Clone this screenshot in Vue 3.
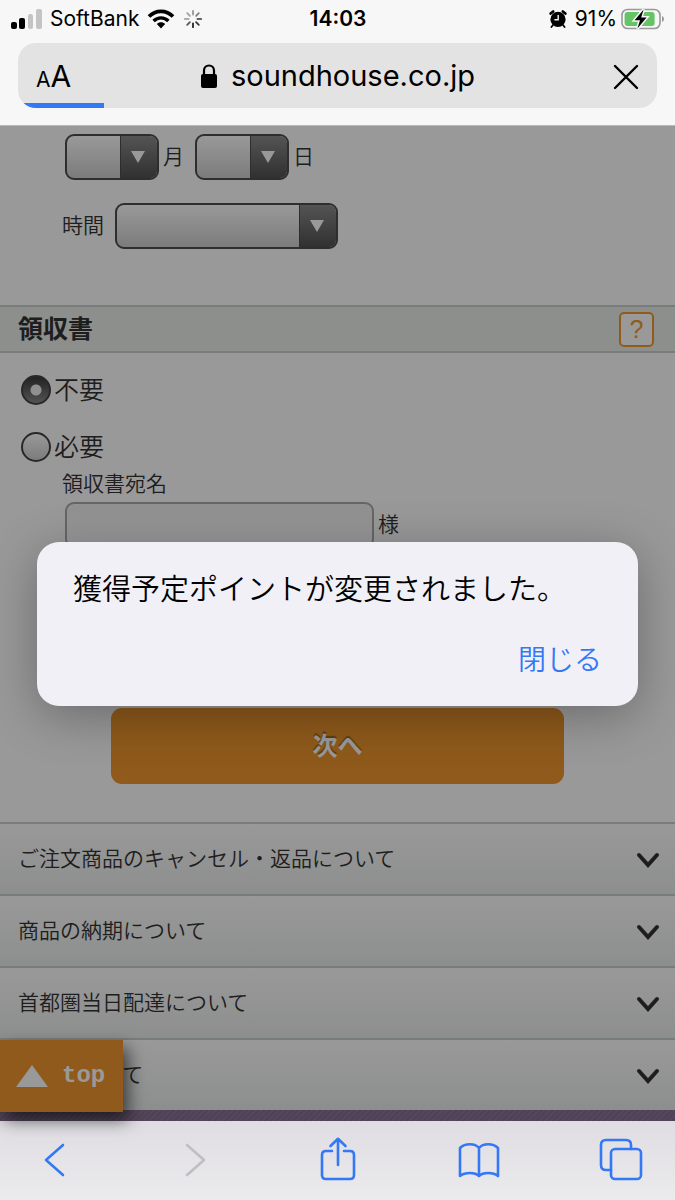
<script setup>
import { ref } from 'vue'

const month = ref('')
const day = ref('')
const time = ref('')
const receipt = ref('none')
const receiptName = ref('')
const showDialog = ref(true)
const progress = 13.5

const spokes = [0, 45, 90, 135, 180, 225, 270, 315]
const spokeOpacity = [0.45, 0.55, 0.7, 0.9, 1, 0.75, 0.35, 0.4]

// Help links under the form
const links = [
  'ご注文商品のキャンセル・返品について',
  '商品の納期について',
  '首都圏当日配達について',
  '送料について'
]
</script>

<template>
<div class="phone">

  <header class="browser-bar">
    <div class="status">
      <div class="status-left">
        <svg class="signal" width="31" height="20" viewBox="0 0 31 20">
          <rect x="0" y="13" width="6" height="7" rx="2" />
          <rect x="8" y="9" width="6" height="11" rx="2" />
          <rect x="17" y="5" width="5" height="15" rx="2" fill="#c4c4c4" />
          <rect x="25" y="0" width="6" height="20" rx="2" fill="#c4c4c4" />
        </svg>
        <span>SoftBank</span>
        <svg class="wifi" width="28" height="20" viewBox="0 0 28 20">
          <path d="M2 7.6C8.6 0.6 19.4 0.6 26 7.6" fill="none" stroke="#000" stroke-width="3.6" />
          <path d="M6.6 12C10.8 7.8 17.2 7.8 21.4 12" fill="none" stroke="#000" stroke-width="3.4" />
          <path d="M9.8 15C12.2 12.6 15.8 12.6 18.2 15L14 19.4Z" />
        </svg>
        <svg width="20" height="20" viewBox="-10 -10 20 20">
          <line
            v-for="(a, i) in spokes"
            :key="a"
            x1="0" y1="-4.4" x2="0" y2="-8.2"
            stroke="#222"
            stroke-width="1.8"
            stroke-linecap="round"
            :opacity="spokeOpacity[i]"
            :transform="`rotate(${a})`"
          />
        </svg>
      </div>

      <strong class="clock">14:03</strong>

      <div class="status-right">
        <svg width="18" height="18" viewBox="0 0 18 18">
          <circle cx="9" cy="9.4" r="7.6" />
          <path d="M1.6 3.6L4.2 1.4M16.4 3.6L13.8 1.4" stroke="#000" stroke-width="2.6" stroke-linecap="round" />
          <path d="M4 15L2.4 17M14 15L15.6 17" stroke="#000" stroke-width="1.8" stroke-linecap="round" />
          <path d="M9.2 5V9.8H5.4" fill="none" stroke="#f7f7f7" stroke-width="1.4" />
        </svg>
        <span>91%</span>
        <svg class="battery" width="44" height="22" viewBox="0 0 44 22">
          <rect x="1" y="1.5" width="38" height="19" rx="5.5" fill="none" stroke="#999" stroke-width="1.6" />
          <path d="M41 8C43.6 9 43.6 13 41 14Z" fill="#999" />
          <rect x="3.6" y="4" width="30" height="14" rx="3" fill="#65c466" />
          <path d="M22.6 1.4L13.6 12.2H19L16.4 20.6L25.6 9.6H20.2Z" stroke="#f7f7f7" stroke-width="3" />
          <path d="M22.6 1.4L13.6 12.2H19L16.4 20.6L25.6 9.6H20.2Z" />
        </svg>
      </div>
    </div>

    <div class="address">
      <button class="text-size"><small>A</small>A</button>
      <button class="url">
        <svg width="18" height="24" viewBox="0 0 18 24">
          <rect x="1" y="10" width="16" height="14" rx="2" />
          <path d="M4 11V6.5C4 -0.2 14 -0.2 14 6.5V11" fill="none" stroke="#000" stroke-width="2.2" />
        </svg>
        soundhouse.co.jp
      </button>
      <button class="stop">
        <svg width="26" height="26" viewBox="0 0 26 26">
          <path d="M2 3L24 25M24 3L2 25" stroke="#000" stroke-width="2.4" stroke-linecap="round" />
        </svg>
      </button>
      <div class="progress" :style="{ width: progress + '%' }"></div>
    </div>
  </header>

  <main class="page">
    <form class="form" @submit.prevent>
      <div class="date-row">
        <span class="select-box">
          <select id="month" v-model="month"></select>
        </span>
        <label for="month">月</label>
        <span class="select-box">
          <select id="day" v-model="day"></select>
        </span>
        <label for="day">日</label>
      </div>

      <div class="time-row">
        <label for="time">時間</label>
        <span class="select-box wide">
          <select id="time" v-model="time"></select>
        </span>
      </div>

      <div class="section-title">
        <h2>領収書</h2>
        <button type="button" class="help">?</button>
      </div>

      <div class="receipt">
        <label class="radio">
          <input type="radio" value="none" v-model="receipt" />不要
        </label>
        <label class="radio">
          <input type="radio" value="need" v-model="receipt" />必要
        </label>
        <div class="receipt-name">
          <label for="receipt-name">領収書宛名</label>
          <div class="name-row">
            <input id="receipt-name" type="text" v-model="receiptName" />
            <span>様</span>
          </div>
        </div>
      </div>

      <button type="submit" class="next">次へ</button>
    </form>

    <nav class="links">
      <a v-for="link in links" :key="link" href="#">
        {{ link }}
        <svg width="24" height="16" viewBox="0 0 24 16">
          <path d="M3 3L12 13L21 3" fill="none" stroke="#333" stroke-width="4" stroke-linecap="round" />
        </svg>
      </a>
    </nav>
    <div class="footer-strip"></div>

    <a class="to-top" href="#">
      <svg width="32" height="22" viewBox="0 0 32 22">
        <path d="M16 0L32 22H0Z" fill="#fff" />
      </svg>
      top
    </a>

    <div v-if="showDialog" class="backdrop">
      <div class="dialog" role="alertdialog">
        <p>獲得予定ポイントが変更されました。</p>
        <button @click="showDialog = false">閉じる</button>
      </div>
    </div>
  </main>

  <footer class="toolbar">
    <button>
      <svg width="44" height="44" viewBox="0 0 44 44">
        <path d="M31 6L14 21L31 36" />
      </svg>
    </button>
    <button class="off">
      <svg width="44" height="44" viewBox="0 0 44 44">
        <path d="M13 6L30 21L13 36" />
      </svg>
    </button>
    <button>
      <svg width="44" height="44" viewBox="0 0 44 44">
        <path d="M16 12H10Q6 12 6 16V36Q6 40 10 40H34Q38 40 38 36V16Q38 12 34 12H28" />
        <path d="M22 26V0M14.5 7L22 -0.2L29.5 7" />
      </svg>
    </button>
    <button>
      <svg width="44" height="44" viewBox="0 0 44 44">
        <path d="M22 9C18 4 8 4 3 9V37C8 33 18 33 22 37C26 33 36 33 41 37V9C36 4 26 4 22 9ZM22 9V37" />
      </svg>
    </button>
    <button>
      <svg width="44" height="44" viewBox="0 0 44 44">
        <rect x="12" y="10" width="30" height="30" rx="4" />
        <path d="M12 31H7Q2 31 2 26V6Q2 1 7 1H27Q32 1 32 6V10" />
      </svg>
    </button>
  </footer>

</div>
</template>

<style>
body {
  margin: 0;
}
</style>

<style scoped>
.phone {
  min-height: 100vh;
  display: flex;
  flex-direction: column;
  font-family: "Noto Sans CJK JP", sans-serif;
  font-weight: 350;
  color: #333;
}

.phone * {
  box-sizing: border-box;
}

button {
  border: none;
  background: none;
  padding: 0;
  font-family: inherit;
  font-weight: inherit;
  color: inherit;
  cursor: pointer;
}

svg {
  display: block;
  flex: none;
  overflow: visible;
}

/* Browser bar */
.browser-bar {
  background: #f7f7f7;
  border-bottom: 1px solid #bbb;
  padding: 0 18px 17px;
  font-family: Inter, sans-serif;
  font-weight: 400;
  color: #000;
}

.status {
  display: grid;
  grid-template-columns: 1fr auto 1fr;
  align-items: center;
  height: 37px;
  margin: 0 -8px 6px -7px;
  font-size: 21px;
}

.status-left,
.status-right {
  display: flex;
  align-items: center;
  gap: 8px;
}

.status-right {
  justify-content: flex-end;
}

.battery {
  margin-left: -4px;
}

.clock {
  font-weight: 600;
}

.address {
  position: relative;
  overflow: hidden;
  display: grid;
  grid-template-columns: 1fr auto 1fr;
  align-items: center;
  height: 65px;
  padding: 0 18px;
  border-radius: 18px;
  background: #e3e3e3;
}

.text-size {
  justify-self: start;
  font-size: 30px;
}

.text-size small {
  font-size: 21px;
}

.url {
  display: flex;
  align-items: center;
  gap: 13px;
  font-size: 29px;
}

.stop {
  justify-self: end;
}

.progress {
  position: absolute;
  left: 0;
  bottom: 0;
  height: 5px;
  background: #3478f6;
}

/* Page */
.page {
  position: relative;
  flex: 1;
  background: #fff;
  font-size: 21px;
  line-height: 30px;
}

.date-row,
.time-row,
.name-row {
  display: flex;
  align-items: center;
  gap: 4px;
}

.date-row {
  padding: 8px 65px 0;
}

.date-row label,
.time-row label,
.name-row span {
  padding-bottom: 4px;
}

.date-row label {
  margin-right: 7px;
}

.time-row {
  padding: 23px 62px 56px;
}

.time-row label {
  margin-right: 7px;
}

.select-box {
  position: relative;
  width: 94px;
  height: 46px;
}

.select-box.wide {
  width: 223px;
}

.select-box select {
  appearance: none;
  width: 100%;
  height: 100%;
  border: 2px solid #4d4d4d;
  border-radius: 9px;
  background: linear-gradient(#fff, #cfcfcf);
}

.select-box::before {
  content: '';
  position: absolute;
  top: 2px;
  right: 2px;
  bottom: 2px;
  width: 36px;
  border-left: 1px solid #4d4d4d;
  border-radius: 0 7px 7px 0;
  background: linear-gradient(#8c8c8c, #525252);
  pointer-events: none;
}

.select-box::after {
  content: '';
  position: absolute;
  top: 17px;
  right: 14px;
  border: 7px solid transparent;
  border-top: 12px solid #fff;
  border-bottom: none;
  pointer-events: none;
}

.section-title {
  display: flex;
  align-items: center;
  justify-content: space-between;
  height: 48px;
  padding: 0 21px 0 18px;
  background: #ebeeec;
  border-top: 2px solid #c9cfcc;
  border-bottom: 2px solid #c9cfcc;
}

.section-title h2 {
  margin: 0;
  padding-bottom: 4px;
  font-size: 25px;
  font-weight: 700;
}

.help {
  width: 35px;
  height: 35px;
  border: 2px solid #ee9a2d;
  border-radius: 5px;
  background: #fff;
  color: #ee9a2d;
  font-family: "Liberation Sans", sans-serif;
  font-size: 25px;
  line-height: 30px;
}

.receipt {
  padding: 22px 21px 0;
}

.radio {
  display: flex;
  gap: 3px;
  height: 30px;
  margin-bottom: 27px;
  font-size: 25px;
  line-height: 26px;
}

.radio + .radio {
  margin-bottom: 5px;
}

.radio input {
  appearance: none;
  width: 30px;
  height: 30px;
  margin: 0;
  border: 2px solid #444;
  border-radius: 50%;
  background: linear-gradient(#fff, #cfcfcf);
}

.radio input:checked {
  background:
    radial-gradient(circle, #f0f0f0 5px, transparent 6px),
    linear-gradient(#3a3a3a, #8a8a8a);
}

.receipt-name {
  padding-left: 41px;
}

.receipt-name label {
  display: block;
  margin-bottom: 5px;
}

.name-row input {
  width: 309px;
  height: 46px;
  margin-left: 3px;
  border: 2px solid #aaa;
  border-radius: 9px;
  background: linear-gradient(#f2f2f2, #fff);
}

.next {
  display: block;
  width: 67.2%;
  height: 76px;
  margin: 160px auto 38px;
  padding-bottom: 4px;
  border-radius: 11px;
  background: #ee962d;
  color: #fff;
  font-size: 25px;
  font-weight: 700;
  text-shadow: 0 -2px 1px rgba(0, 0, 0, 0.35);
}

.links a {
  display: flex;
  align-items: center;
  justify-content: space-between;
  height: 72px;
  padding: 0 15px 4px 18px;
  border-top: 2px solid #c9cfcc;
  background: linear-gradient(#fff, #ebeeec);
  color: #333;
  text-decoration: none;
}

.links svg {
  margin-top: 6px;
}

.footer-strip {
  height: 11px;
  background: repeating-linear-gradient(135deg, #8e7798 0 2px, #866f90 2px 4px);
}

.to-top {
  position: absolute;
  left: 0;
  bottom: 9px;
  display: flex;
  align-items: center;
  gap: 14px;
  width: 123px;
  height: 72px;
  padding-left: 16px;
  background: #ee962d;
  box-shadow: 5px 8px 16px rgba(0, 0, 0, 0.6);
  color: #fff;
  font-family: "Liberation Mono", monospace;
  font-size: 24px;
  font-weight: 700;
  text-decoration: none;
}

/* Alert */
.backdrop {
  position: absolute;
  inset: 0;
  display: grid;
  align-items: center;
  padding: 0 37px;
  overflow: hidden;
  background: rgba(0, 0, 0, 0.4);
}

.dialog {
  padding: 25px 36px 28px;
  border-radius: 22px;
  background: #f1f0f6;
  box-shadow: 0 10px 50px rgba(0, 0, 0, 0.3);
  color: #000;
  text-align: right;
}

.dialog p {
  margin: 0 0 31px;
  font-size: 29px;
  line-height: 40px;
  text-align: left;
}

.dialog button {
  color: #3478f6;
  font-size: 28px;
  line-height: 40px;
}

/* Toolbar */
.toolbar {
  display: flex;
  align-items: center;
  justify-content: space-between;
  height: 79px;
  padding: 0 32px;
  background: linear-gradient(#dfdde2, #ebeaec);
}

.toolbar svg {
  fill: none;
  stroke: #3478f6;
  stroke-width: 2.6;
  stroke-linecap: round;
  stroke-linejoin: round;
}

.toolbar .off svg {
  stroke: #bfbec2;
}
</style>
